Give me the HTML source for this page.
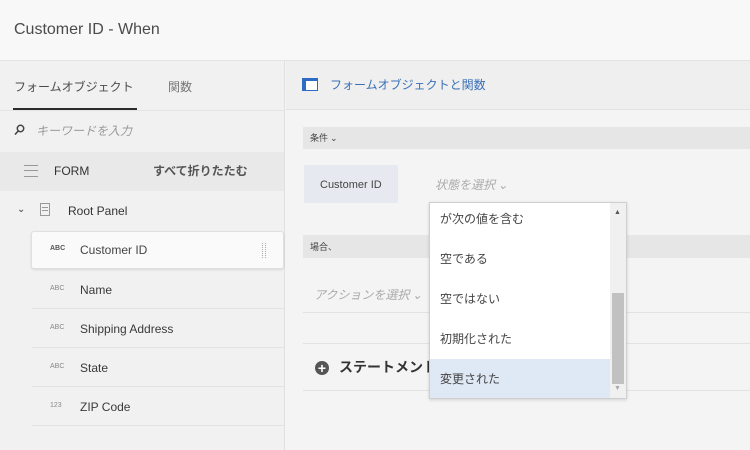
<!DOCTYPE html>
<html><head><meta charset="utf-8"><style>
*{box-sizing:border-box;margin:0;padding:0}
body{width:750px;height:450px;overflow:hidden;background:#f4f4f4;font-family:"Liberation Sans","Noto Sans CJK JP",sans-serif;color:#323232;position:relative}
.a{position:absolute}
.jp{font-family:"Noto Sans CJK JP","Liberation Sans",sans-serif}
</style></head><body>
<div class="a" style="left:0;top:0;width:750px;height:61px;background:#f8f8f8;border-bottom:1px solid #e3e3e3"></div>
<div class="a" style="left:14px;top:21px;font-size:16px;color:#4b4b4b">Customer ID - When</div>
<div class="a" style="left:0;top:61px;width:285px;height:389px;background:#f1f1f1;border-right:1px solid #e0e0e0"></div>
<div class="a jp" style="left:14px;top:78px;font-size:12px;color:#4b4b4b">フォームオブジェクト</div>
<div class="a jp" style="left:168px;top:78px;font-size:12px;color:#777">関数</div>
<div class="a" style="left:13px;top:108px;width:124px;height:2px;background:#2c2c2c"></div>
<div class="a" style="left:0;top:110px;width:284px;height:1px;background:#e4e4e4"></div>
<svg class="a" style="left:14px;top:124px" width="11" height="11"><circle cx="6.5" cy="4.5" r="3.2" fill="none" stroke="#444" stroke-width="1.5"/><line x1="4.2" y1="7" x2="1" y2="10.5" stroke="#444" stroke-width="1.6"/></svg>
<div class="a jp" style="left:36px;top:122px;font-size:12px;color:#9a9a9a;font-style:italic">キーワードを入力</div>
<div class="a" style="left:0;top:152px;width:284px;height:39px;background:#e9e9e9"></div>
<div class="a" style="left:24px;top:165px;width:14px;height:12px;border-top:1px solid #999;border-bottom:1px solid #999"><div style="margin-top:4px;height:1px;background:#999"></div></div>
<div class="a" style="left:54px;top:164px;font-size:12px;color:#333">FORM</div>
<div class="a jp" style="left:153px;top:162px;font-size:12px;color:#555;font-weight:bold">すべて折りたたむ</div>
<div class="a" style="left:17px;top:204px;font-size:10px;color:#444">⌄</div>
<div class="a" style="left:40px;top:203px;width:10px;height:13px;border:1px solid #999"><div style="margin:3px 1px 0;height:1px;background:#999"></div><div style="margin:2px 1px 0;height:1px;background:#999"></div></div>
<div class="a" style="left:68px;top:204px;font-size:12px;color:#333">Root Panel</div>
<div class="a" style="left:31px;top:231px;width:253px;height:38px;background:#fafafa;border:1px solid #e0e0e0;border-radius:3px;box-shadow:0 1px 2px rgba(0,0,0,.1)"></div>
<div class="a" style="left:262px;top:243px;width:4px;height:15px;border-left:1px dotted #aaa;border-right:1px dotted #aaa"></div>
<div class="a" style="left:50px;top:245px;font-size:7px;color:#555;font-weight:bold">ABC</div>
<div class="a" style="left:80px;top:243px;font-size:12px;color:#444">Customer ID</div>
<div class="a" style="left:50px;top:285px;font-size:7px;color:#888">ABC</div>
<div class="a" style="left:80px;top:283px;font-size:12px;color:#3a3a3a">Name</div>
<div class="a" style="left:32px;top:308px;width:252px;height:1px;background:#e2e2e2"></div>
<div class="a" style="left:50px;top:324px;font-size:7px;color:#888">ABC</div>
<div class="a" style="left:80px;top:322px;font-size:12px;color:#3a3a3a">Shipping Address</div>
<div class="a" style="left:32px;top:347px;width:252px;height:1px;background:#e2e2e2"></div>
<div class="a" style="left:50px;top:363px;font-size:7px;color:#888">ABC</div>
<div class="a" style="left:80px;top:361px;font-size:12px;color:#3a3a3a">State</div>
<div class="a" style="left:32px;top:386px;width:252px;height:1px;background:#e2e2e2"></div>
<div class="a" style="left:50px;top:402px;font-size:7px;color:#888">123</div>
<div class="a" style="left:80px;top:400px;font-size:12px;color:#3a3a3a">ZIP Code</div>
<div class="a" style="left:32px;top:425px;width:252px;height:1px;background:#e2e2e2"></div>
<div class="a" style="left:286px;top:61px;width:464px;height:49px;background:#efefef;border-bottom:1px solid #e2e2e2"></div>
<svg class="a" style="left:302px;top:78px" width="16" height="13"><rect x="0.5" y="0.5" width="15" height="12" fill="#fff" stroke="#2d6bc4"/><rect x="0" y="0" width="16" height="3" fill="#2d6bc4"/><rect x="0" y="0" width="4" height="13" fill="#2d6bc4"/></svg>
<div class="a jp" style="left:330px;top:76px;font-size:12px;color:#3a6fb8">フォームオブジェクトと関数</div>
<div class="a" style="left:303px;top:127px;width:447px;height:22px;background:#e6e6e6"></div>
<div class="a jp" style="left:310px;top:131px;font-size:9px;color:#444">条件 ⌄</div>
<div class="a" style="left:304px;top:165px;width:94px;height:38px;background:#e6eaf0;border-radius:2px"></div>
<div class="a" style="left:320px;top:179px;font-size:11px;color:#444">Customer ID</div>
<div class="a jp" style="left:435px;top:176px;font-size:12px;color:#aaa;font-style:italic">状態を選択 ⌄</div>
<div class="a" style="left:303px;top:235px;width:447px;height:23px;background:#e6e6e6"></div>
<div class="a jp" style="left:310px;top:240px;font-size:9px;color:#444">場合、</div>
<div class="a jp" style="left:314px;top:286px;font-size:12px;color:#aaa;font-style:italic">アクションを選択 ⌄</div>
<div class="a" style="left:303px;top:312px;width:447px;height:1px;background:#e2e2e2"></div>
<div class="a" style="left:303px;top:343px;width:447px;height:1px;background:#e2e2e2"></div>
<div class="a" style="left:315px;top:361px;width:14px;height:14px;border-radius:50%;background:#555;color:#fff;font-size:14px;line-height:14px;text-align:center;font-weight:bold">+</div>
<div class="a jp" style="left:339px;top:357px;font-size:14px;color:#333;font-weight:bold">ステートメント</div>
<div class="a" style="left:303px;top:390px;width:447px;height:1px;background:#e2e2e2"></div>
<div class="a" style="left:429px;top:202px;width:198px;height:197px;background:#fff;border:1px solid #cfcfcf;box-shadow:0 1px 3px rgba(0,0,0,.15);overflow:hidden">
<div class="a jp" style="left:10px;top:7px;font-size:12px;color:#444">が次の値を含む</div>
<div class="a jp" style="left:10px;top:47px;font-size:12px;color:#444">空である</div>
<div class="a jp" style="left:10px;top:87px;font-size:12px;color:#444">空ではない</div>
<div class="a jp" style="left:10px;top:127px;font-size:12px;color:#444">初期化された</div>
<div class="a" style="left:0;top:156px;width:180px;height:41px;background:#dfe8f5"></div>
<div class="a jp" style="left:10px;top:167px;font-size:12px;color:#444">変更された</div>
<div class="a" style="left:180px;top:0;width:17px;height:197px;background:#f0f0f0"></div>
<div class="a" style="left:182px;top:90px;width:12px;height:91px;background:#c1c1c1"></div>
<div class="a" style="left:184px;top:6px;font-size:7px;color:#555">▲</div>
<div class="a" style="left:184px;top:182px;font-size:7px;color:#aaa">▼</div>
</div>
</body></html>
